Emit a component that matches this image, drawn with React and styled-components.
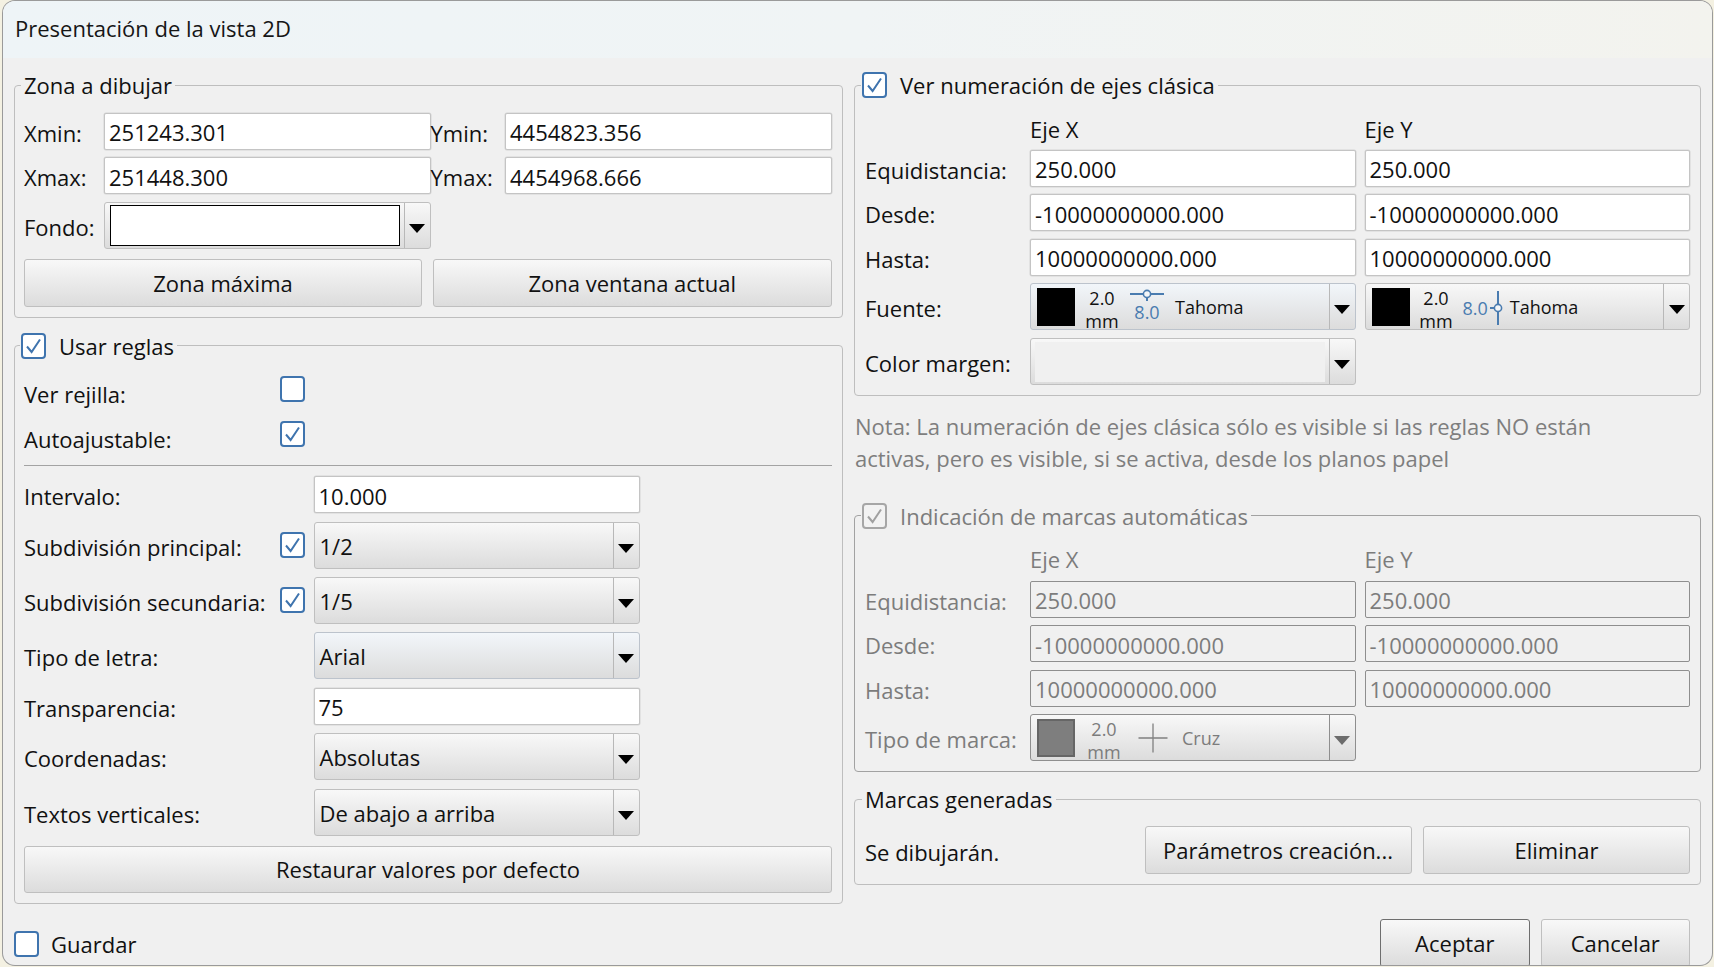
import React from 'react';
import styled, { createGlobalStyle } from 'styled-components';

const Global = createGlobalStyle`
  html, body { margin: 0; padding: 0; background: #f4f1e2; }
  body { font-family: "Open Sans", "Noto Sans", sans-serif; font-size: 22px; color: #111; }
  * { box-sizing: border-box; }
`;

const Page = styled.div`
  width: 1714px; height: 967px; padding: 1px 2px 2px 3px; overflow: hidden;
`;
const Win = styled.div`
  width: 100%; height: 100%; background: #f0f0f0; border-radius: 12px;
  box-shadow: 0 0 0 1px #9a9a9a; overflow: hidden; display: flex; flex-direction: column;
`;
const TitleBar = styled.div`
  height: 57px; flex: none; display: flex; align-items: center; padding: 0 0 3px 12px;
  background: linear-gradient(90deg, #eef4f7 0%, #f0f4f5 50%, #f3f3ee 100%);
  font-size: 22px; color: #161616;
`;
const Body = styled.div`
  flex: 1; display: grid; grid-template-columns: 829px 847px; column-gap: 11px;
  padding: 12px 0 0 11px; grid-template-rows: auto 1fr;
`;
const Column = styled.div`
  display: flex; flex-direction: column;
`;
const Group = styled.fieldset`
  margin: 0; min-width: 0; padding: 0 10px ${p => p.$pb || 10}px 9px;
  border: 1px solid ${p => (p.$disabled ? '#a2a2a2' : '#bebebe')}; border-radius: 4px;
`;
const RightGroup = styled(Group)`
  padding: 0 10px ${p => p.$pb || 10}px 10px;
`;
const Legend = styled.legend`
  height: 30px; display: flex; align-items: center; gap: 13px; padding: 0 3px; margin-left: -3px;
  color: ${p => (p.$disabled ? '#7c7c7c' : '#111')};
`;
const CheckLegend = styled(Legend)`
  padding-left: 1px; margin-left: -4px;
`;
const Box = styled.span`
  width: 25px; height: 26px; flex: none; display: flex; align-items: center; justify-content: center;
  background: ${p => (p.$disabled ? '#f2f2f2' : '#fff')};
  border: 2px solid ${p => (p.$disabled ? '#a6a6a6' : '#3f74ae')}; border-radius: 4px;
`;
const Label = styled.div`
  display: flex; align-items: center; white-space: nowrap; padding-top: 3px;
  color: ${p => (p.$disabled ? '#7c7c7c' : '#111')};
`;
const Field = styled.div`
  height: 37px; display: flex; align-items: center; padding: 2px 0 0 4px; white-space: nowrap;
  background: ${p => (p.$disabled ? '#f0f0f0' : '#fff')};
  border: 1px solid ${p => (p.$disabled ? '#8e8e8e' : '#c4c4c4')}; border-radius: 2px;
  box-shadow: ${p => (p.$disabled ? 'none' : '0 0 0 0.5px #d4d4d4')};
  color: ${p => (p.$disabled ? '#7c7c7c' : '#111')};
`;
const ComboShell = styled.div`
  height: 47px; display: flex; align-items: stretch;
  background: linear-gradient(180deg, ${p => (p.$tint ? '#f2f6fa' : '#f8f8f8')} 0%, #dcdcdc 100%);
  border: 1px solid ${p => (p.$disabled ? '#8e8e8e' : p.$tint ? '#bcc3cc' : '#bfbfbf')}; border-radius: 3px;
`;
const ComboContent = styled.div`
  flex: 1; min-width: 0; display: flex; align-items: center; padding-left: 5px; padding-top: 1px; white-space: nowrap;
`;
const ComboButton = styled.div`
  width: 26px; flex: none; display: flex; align-items: center; justify-content: center; padding-top: 6px;
  border-left: 1px solid ${p => (p.$disabled ? '#8e8e8e' : '#b8b8b8')};
`;
const Arrow = styled.span`
  width: 0; height: 0; border-left: 8px solid transparent; border-right: 8px solid transparent;
  border-top: 9px solid ${p => (p.$disabled ? '#6c6c6c' : '#000')};
`;
const Button = styled.div`
  height: ${p => p.$h || 48}px; display: flex; align-items: center; justify-content: center; white-space: nowrap;
  background: linear-gradient(180deg, #f8f8f8 0%, #dcdcdc 100%);
  border: 1px solid ${p => (p.$primary ? '#6e6e6e' : '#bfbfbf')}; border-radius: 3px;
`;
const ZoneGrid = styled.div`
  display: grid; grid-template-columns: 80px 326.5px 74.5px 326.5px; row-gap: 7.6px; padding-top: 12.5px;
`;
const Pair = styled.div`
  display: grid; grid-template-columns: 398px 398.5px; column-gap: 11px; margin-top: 10px;
`;
const ChecksGrid = styled.div`
  display: grid; grid-template-columns: 256px 33.5px 326px; row-gap: 12px; padding-top: 15px;
`;
const Divider = styled.div`
  height: 1px; background: #a3a3a3; margin: 11.5px 0 10px;
`;
const RulesGrid = styled.div`
  display: grid; grid-template-columns: 256px 33.5px 326px; row-gap: 8.4px; align-items: center;
`;
const WideButton = styled(Button)`
  margin-top: 10px; height: 47px;
`;
const AxisGrid = styled.div`
  display: grid; grid-template-columns: 156px 1fr 1fr; column-gap: 9px; row-gap: 7.6px; padding-top: 15px;
`;
const AxisHead = styled.div`
  height: 27px; display: flex; align-items: center;
  color: ${p => (p.$disabled ? '#7c7c7c' : '#111')};
`;
const Note = styled.div`
  margin: 14px 0 27px; padding-left: 1px; line-height: 32px; color: #7e7e7e; white-space: nowrap;
`;
const MarksRow = styled.div`
  display: grid; grid-template-columns: 1fr 267px 267px; column-gap: 11.5px; padding-top: 12px; align-items: center;
`;
const SpacedGroup = styled(RightGroup)`
  margin-top: 12px;
`;
const Footer = styled.div`
  grid-column: 1 / -1; display: flex; align-items: flex-start; justify-content: space-between;
  padding: 15px 11px 0 0;
`;
const SaveCheck = styled.div`
  display: flex; align-items: center; gap: 12px; margin-top: 10px;
`;
const Actions = styled.div`
  display: grid; grid-template-columns: 149.5px 149.5px; column-gap: 11px;
`;
const Swatch = styled.span`
  width: 38px; height: 38px; flex: none; margin-left: 1px;
  background: ${p => (p.$disabled ? '#7e7e7e' : '#000')};
  border: ${p => (p.$disabled ? '2px solid #666' : 'none')};
`;
const Small = styled.div`
  font-size: 18px; line-height: 23px; white-space: nowrap; color: ${p => p.$color || '#111'};
`;
const SizeBlock = styled.div`
  width: ${p => p.$w}px; flex: none; display: flex; flex-direction: column; align-items: center;
  padding-top: 5px; font-size: 18px; line-height: 23px; color: ${p => (p.$disabled ? '#7c7c7c' : '#111')};
`;
const OverPin = styled.div`
  width: 36px; flex: none; display: flex; flex-direction: column; align-items: center; margin-top: -3px;
`;
const SidePin = styled.div`
  flex: none; display: flex; align-items: center; padding-top: 2px;
`;
const FontName = styled(Small)`
  margin-left: ${p => p.$ml}px; padding-top: 1px;
`;
const Blank = styled.div`
  flex: 1; align-self: center; height: 40px; margin-left: -1px; margin-right: 4px; background: #f0f0f0;
`;
const WhiteWell = styled.div`
  flex: 1; align-self: center; height: 41px; margin: 0 4px 0 0; background: #fff; border: 1.5px solid #000;
`;

const Check = ({ checked = true, disabled }) => (
  <Box $disabled={disabled}>
    {checked && (
      <svg width="19" height="18" viewBox="0 0 19 18" fill="none">
        <path d="M3 9.5 L7.6 15 L16 2.5" stroke={disabled ? '#a0a0a0' : '#3f74ae'} strokeWidth="2" />
      </svg>
    )}
  </Box>
);

const Combo = ({ children, tint, disabled }) => (
  <ComboShell $tint={tint} $disabled={disabled}>
    <ComboContent>{children}</ComboContent>
    <ComboButton $disabled={disabled}><Arrow $disabled={disabled} /></ComboButton>
  </ComboShell>
);

const BLUE = '#4a7cb0';

const Axis = ({ disabled, values = ['250.000', '-10000000000.000', '10000000000.000'] }) => {
  const labels = ['Equidistancia:', 'Desde:', 'Hasta:'];
  return (
    <>
      <span />
      <AxisHead $disabled={disabled}>Eje X</AxisHead>
      <AxisHead $disabled={disabled}>Eje Y</AxisHead>
      {labels.map((l, i) => (
        <React.Fragment key={l}>
          <Label $disabled={disabled}>{l}</Label>
          <Field $disabled={disabled}>{values[i]}</Field>
          <Field $disabled={disabled}>{values[i]}</Field>
        </React.Fragment>
      ))}
    </>
  );
};

export default function App() {
  return (
    <Page>
      <Global />
      <Win>
        <TitleBar>Presentación de la vista 2D</TitleBar>
        <Body>
          <Column>
            <Group $pb={10}>
              <Legend>Zona a dibujar</Legend>
              <ZoneGrid>
                <Label>Xmin:</Label>
                <Field>251243.301</Field>
                <Label>Ymin:</Label>
                <Field>4454823.356</Field>
                <Label>Xmax:</Label>
                <Field>251448.300</Field>
                <Label>Ymax:</Label>
                <Field>4454968.666</Field>
                <Label>Fondo:</Label>
                <ComboShell>
                  <ComboContent><WhiteWell /></ComboContent>
                  <ComboButton><Arrow /></ComboButton>
                </ComboShell>
              </ZoneGrid>
              <Pair>
                <Button>Zona máxima</Button>
                <Button>Zona ventana actual</Button>
              </Pair>
            </Group>
            <Group style={{ marginTop: 13 }}>
              <CheckLegend><Check />Usar reglas</CheckLegend>
              <ChecksGrid>
                <Label>Ver rejilla:</Label>
                <Check checked={false} />
                <span />
                <Label>Autoajustable:</Label>
                <Check />
                <span />
              </ChecksGrid>
              <Divider />
              <RulesGrid>
                <Label>Intervalo:</Label><span />
                <Field>10.000</Field>
                <Label>Subdivisión principal:</Label><Check />
                <Combo>1/2</Combo>
                <Label>Subdivisión secundaria:</Label><Check />
                <Combo>1/5</Combo>
                <Label>Tipo de letra:</Label><span />
                <Combo tint>Arial</Combo>
                <Label>Transparencia:</Label><span />
                <Field>75</Field>
                <Label>Coordenadas:</Label><span />
                <Combo>Absolutas</Combo>
                <Label>Textos verticales:</Label><span />
                <Combo>De abajo a arriba</Combo>
              </RulesGrid>
              <WideButton>Restaurar valores por defecto</WideButton>
            </Group>
          </Column>
          <Column>
            <RightGroup>
              <CheckLegend><Check />Ver numeración de ejes clásica</CheckLegend>
              <AxisGrid>
                <Axis />
                <Label>Fuente:</Label>
                <Combo tint>
                  <Swatch />
                  <SizeBlock $w={54}><div>2.0</div><div>mm</div></SizeBlock>
                  <OverPin>
                    <svg width="36" height="14" viewBox="0 0 36 14" fill="none">
                      <path d="M1 7 H35 M18 11 V14" stroke={BLUE} strokeWidth="2" />
                      <circle cx="18" cy="7" r="3.6" fill="#f4f6f8" stroke={BLUE} strokeWidth="1.6" />
                    </svg>
                    <Small $color={BLUE}>8.0</Small>
                  </OverPin>
                  <FontName $ml={10}>Tahoma</FontName>
                </Combo>
                <Combo tint={false}>
                  <Swatch />
                  <SizeBlock $w={53}><div>2.0</div><div>mm</div></SizeBlock>
                  <SidePin>
                    <Small $color={BLUE}>8.0</Small>
                    <svg width="15" height="36" viewBox="0 0 15 36" fill="none">
                      <path d="M10 1 V35 M2 18 H6" stroke={BLUE} strokeWidth="2" />
                      <circle cx="10" cy="18" r="3.6" fill="#f4f6f8" stroke={BLUE} strokeWidth="1.6" />
                    </svg>
                  </SidePin>
                  <FontName $ml={7}>Tahoma</FontName>
                </Combo>
                <Label>Color margen:</Label>
                <ComboShell>
                  <ComboContent><Blank /></ComboContent>
                  <ComboButton><Arrow /></ComboButton>
                </ComboShell>
                <span />
              </AxisGrid>
            </RightGroup>
            <Note>
              Nota: La numeración de ejes clásica sólo es visible si las reglas NO están<br />
              activas, pero es visible, si se activa, desde los planos papel
            </Note>
            <RightGroup $disabled>
              <CheckLegend $disabled><Check disabled />Indicación de marcas automáticas</CheckLegend>
              <AxisGrid>
                <Axis disabled />
                <Label $disabled>Tipo de marca:</Label>
                <Combo disabled>
                  <Swatch $disabled />
                  <SizeBlock $w={58} $disabled><div>2.0</div><div>mm</div></SizeBlock>
                  <svg width="30" height="30" viewBox="0 0 30 30" fill="none" style={{ marginLeft: 5, flex: 'none' }}>
                    <path d="M0.5 15 H29.5 M15 0.5 V29.5" stroke="#808080" strokeWidth="1.3" />
                  </svg>
                  <FontName $ml={14} $color="#7c7c7c">Cruz</FontName>
                </Combo>
                <span />
              </AxisGrid>
            </RightGroup>
            <SpacedGroup>
              <Legend>Marcas generadas</Legend>
              <MarksRow>
                <Label>Se dibujarán.</Label>
                <Button>Parámetros creación...</Button>
                <Button>Eliminar</Button>
              </MarksRow>
            </SpacedGroup>
          </Column>
          <Footer>
            <SaveCheck><Check checked={false} />Guardar</SaveCheck>
            <Actions>
              <Button $primary>Aceptar</Button>
              <Button>Cancelar</Button>
            </Actions>
          </Footer>
        </Body>
      </Win>
    </Page>
  );
}
